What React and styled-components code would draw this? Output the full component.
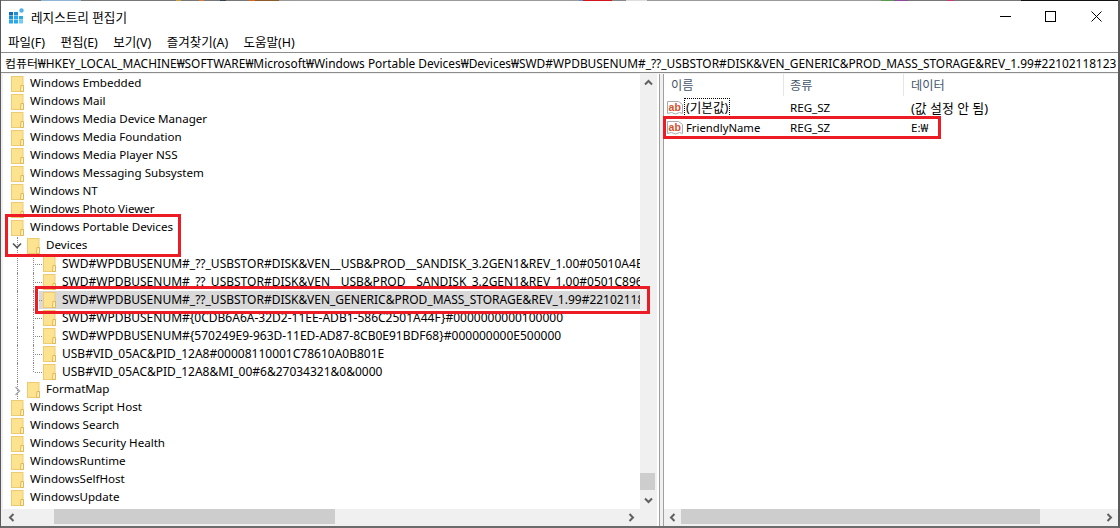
import React from 'react';
import styled, { createGlobalStyle } from 'styled-components';

const Global = createGlobalStyle`
  html, body { margin: 0; padding: 0; background: #fff; overflow: hidden; }
  * { box-sizing: border-box; }
`;
const FONT = `"Noto Sans", "Noto Sans CJK KR", sans-serif`;

const Window = styled.div`
  position: relative;
  width: 1120px;
  height: 528px;
  background: #f0f0f0;
  overflow: hidden;
  display: flex;
  flex-direction: column;
  font-family: ${FONT};
  font-size: 12px;
  color: #000;
  border-left: 1px solid #5a5a5a;
  border-right: 2px solid #5a5a5a;
  border-bottom: 2px solid #6b6b6b;
`;
const DesktopStrip = styled.div`
  height: 1px;
  flex: none;
  background: linear-gradient(90deg,
    #777 0 40px, #8fb4d8 40px 80px, #777 80px 175px, #d09a3c 175px 180px, #777 180px 198px, #d87a3c 198px 203px,
    #777 203px 219px, #30404f 219px 225px, #777 225px 248px, #d8641e 248px 254px, #8a5a2a 254px 278px,
    #999 278px 578px, #5a8fc8 578px 582px, #d4141c 582px 611px, #888 611px 625px, #ddd 625px 646px, #999 646px 880px,
    #5a9a50 880px 893px, #8a4a9a 893px 907px, #777 907px 946px, #c8387a 946px 953px, #777 953px 1020px, #111 1020px);
`;
const TitleBar = styled.div`
  height: 30px;
  flex: none;
  display: flex;
  align-items: center;
  padding-left: 8px;
  gap: 6px;
  background: #fff;
`;
const TitleText = styled.div`
  font-size: 12.6px;
  flex: 1;
`;
const WinButtons = styled.div`
  display: flex;
  margin-right: -1px;
`;
const WinBtn = styled.div`
  width: 45.5px;
  height: 30px;
  display: flex;
  align-items: center;
  justify-content: center;
`;
const MenuBar = styled.div`
  height: 21px;
  flex: none;
  display: flex;
  align-items: center;
  gap: 15.4px;
  padding-left: 7px;
  background: #fff;
`;
const MenuItem = styled.span`
  font-size: 12.5px;
  white-space: nowrap;
`;
const AddressBar = styled.div`
  height: 21px;
  flex: none;
  display: flex;
  align-items: center;
  padding-left: 4px;
  overflow: hidden;
  white-space: nowrap;
  border-top: 1px solid #8c8c8c;
  border-bottom: 1px solid #8c8c8c;
  background: #fff;
  font-size: 11.9px;
`;
const Panes = styled.div`
  flex: 1;
  min-height: 0;
  display: flex;
  padding-top: 1px;
  background: #f0f0f0;
`;
const LeftPane = styled.div`
  width: 657px;
  flex: none;
  margin-left: 2px;
  display: grid;
  grid-template-columns: 637px 17px;
  grid-template-rows: 435px 17px;
  background: #fff;
  border-right: 1px solid #a0a0a0;
`;
const Splitter = styled.div`
  width: 3px;
  flex: none;
`;
const RightPane = styled.div`
  flex: 1;
  min-width: 0;
  display: grid;
  grid-template-rows: 435px 17px;
  background: #fff;
  border-left: 1px solid #a0a0a0;
`;
const TreeView = styled.div`
  overflow: hidden;
  min-width: 0;
  padding-top: 1px;
  position: relative;
`;
const TreeRow = styled.div`
  height: 18px;
  display: flex;
  align-items: center;
  position: relative;
  padding-left: ${p => p.$indent}px;
  white-space: nowrap;
`;
const RowLabel = styled.span`
  margin-left: 6px;
  font-size: ${p => (p.$caps ? 12 : 11.6)}px;
  line-height: 16px;
  padding-bottom: ${p => (p.$caps ? 0 : 2)}px;
  white-space: nowrap;
`;
const SelectedBand = styled.div`
  display: flex;
  align-items: center;
  background: #d9d9d9;
  height: 18px;
  flex: 1;
  min-width: 0;
  margin-left: -4px;
  padding-left: 4px;
  overflow: hidden;
  white-space: nowrap;
`;
const GuideV = styled.i`
  position: absolute;
  left: ${p => p.$x}px;
  top: 0;
  height: ${p => (p.$half ? 9 : 18)}px;
  border-left: 1px dotted #8a8a8a;
`;
const GuideH = styled.i`
  position: absolute;
  left: ${p => p.$x}px;
  top: 9px;
  width: 7px;
  border-top: 1px dotted #8a8a8a;
`;
const Chevron = styled.svg`
  position: absolute;
  left: ${p => p.$left}px;
  top: 5px;
`;
const VScroll = styled.div`
  background: #f0f0f0;
  display: flex;
  flex-direction: column;
  align-items: center;
`;
const VTrack = styled.div`
  flex: 1;
  width: 100%;
  position: relative;
`;
const VThumb = styled.div`
  position: absolute;
  left: 0;
  right: 2px;
  top: ${p => p.$top}px;
  height: 17px;
  background: #cdcdcd;
`;
const ScrollEnd = styled.div`
  width: 17px;
  height: 17px;
  flex: none;
  display: flex;
  align-items: center;
  justify-content: center;
`;
const HScroll = styled.div`
  background: #f0f0f0;
  display: flex;
  align-items: stretch;
`;
const HThumb = styled.div`
  background: #cdcdcd;
  margin: 0 0 2px ${p => p.$gap}px;
  width: ${p => p.$w}px;
  flex: none;
`;
const HSpace = styled.div`
  flex: 1;
`;
const Corner = styled.div`
  background: #f0f0f0;
`;
const ListView = styled.div`
  overflow: hidden;
  display: flex;
  flex-direction: column;
`;
const ListHead = styled.div`
  height: 23px;
  flex: none;
  display: grid;
  grid-template-columns: 120px 120px 1fr;
  color: #45556b;
`;
const HeadCell = styled.div`
  border-right: ${p => (p.$last ? 'none' : '1px solid #e5e5e5')};
  padding-left: ${p => (p.$tight ? 6 : 7)}px;
  font-size: 12.2px;
  display: flex;
  align-items: center;
  margin-bottom: 1px;
`;
const ListRow = styled.div`
  height: 20px;
  display: grid;
  grid-template-columns: 120px 120px 1fr;
  align-items: center;
  font-size: 12px;
`;
const NameCell = styled.div`
  display: flex;
  align-items: center;
  padding-left: 3px;
  gap: 2px;
  white-space: nowrap;
`;
const NameText = styled.span`
  padding: 0 1px;
  line-height: 17px;
  font-size: ${p => (p.$ko ? 12.6 : 11.3)}px;
  outline: ${p => (p.$focus ? '1px dotted #000' : 'none')};
`;
const Cell = styled.div`
  padding-left: ${p => (p.$tight ? 6 : 7)}px;
  white-space: nowrap;
  font-size: ${p => (p.$ko ? 12.9 : 11.6)}px;
`;
const RedBox = styled.div`
  position: absolute;
  left: ${p => p.$l}px;
  top: ${p => p.$t}px;
  width: ${p => p.$w}px;
  height: ${p => p.$h}px;
  border: 3px solid #ed1c24;
  pointer-events: none;
`;

const Folder = () => (
  <svg width="13" height="16" viewBox="0 0 13 16" style={{ flex: 'none' }}>
    <rect x=".5" y=".5" width="11.5" height="15" fill="#fde290" stroke="#eecb72" />
    <path d="M10 9.5h2.5v6H9.5z" fill="#fff3c8" stroke="#e2b650" />
  </svg>
);
const AppIcon = () => (
  <svg width="16" height="16" viewBox="0 0 16 16" style={{ flex: 'none' }}>
    <rect x="0" y="4" width="4" height="3.5" fill="#0f6cb5" />
    <rect x="5" y="4" width="4" height="3.5" fill="#1b91d9" />
    <rect x="0" y="8" width="4" height="3.5" fill="#1b91d9" />
    <rect x="5" y="8" width="4" height="3.5" fill="#2ba8e8" />
    <rect x="10" y="8" width="4" height="3.5" fill="#2ba8e8" />
    <rect x="0" y="12" width="4" height="3.5" fill="#2ba8e8" />
    <rect x="5" y="12" width="4" height="3.5" fill="#2ba8e8" />
    <rect x="10" y="12" width="4" height="3.5" fill="#6fcdf5" />
    <circle cx="12.5" cy="2.5" r="2.2" fill="#4fb4e6" />
  </svg>
);
const RegIcon = () => (
  <svg width="16" height="15" viewBox="0 0 16 15" style={{ flex: 'none' }}>
    <path d="M.5 1.5h11l4 3v9l-3-1-4 1.5-4-1.5-4 1z" fill="#fff" stroke="#ababab" />
    <text x="1.6" y="10.5" fontFamily="Liberation Sans, sans-serif" fontWeight="700" fontSize="10.5" fill="#d4522c">ab</text>
  </svg>
);
const Arrow = ({ dir }) => {
  const rot = { up: 0, down: 180, left: 270, right: 90 }[dir];
  return (
    <svg width="9" height="7" viewBox="0 0 9 7" style={{ transform: `rotate(${rot}deg)` }}>
      <path d="M1 5.5l3.5-3.5 3.5 3.5" fill="none" stroke="#606060" strokeWidth="2" />
    </svg>
  );
};

const rows = [
  ['Windows Embedded', 1], ['Windows Mail', 1], ['Windows Media Device Manager', 1], ['Windows Media Foundation', 1],
  ['Windows Media Player NSS', 1], ['Windows Messaging Subsystem', 1], ['Windows NT', 1], ['Windows Photo Viewer', 1],
  ['Windows Portable Devices', 1], ['Devices', 2, 'open'],
  ['SWD#WPDBUSENUM#_??_USBSTOR#DISK&VEN__USB&PROD__SANDISK_3.2GEN1&REV_1.00#05010A4B4F1B0000', 3],
  ['SWD#WPDBUSENUM#_??_USBSTOR#DISK&VEN__USB&PROD__SANDISK_3.2GEN1&REV_1.00#0501C896C1B20000', 3],
  ['SWD#WPDBUSENUM#_??_USBSTOR#DISK&VEN_GENERIC&PROD_MASS_STORAGE&REV_1.99#22102118123456', 3, 'sel'],
  ['SWD#WPDBUSENUM#{0CDB6A6A-32D2-11EE-ADB1-586C2501A44F}#0000000000100000', 3],
  ['SWD#WPDBUSENUM#{570249E9-963D-11ED-AD87-8CB0E91BDF68}#000000000E500000', 3],
  ['USB#VID_05AC&PID_12A8#00008110001C78610A0B801E', 3],
  ['USB#VID_05AC&PID_12A8&MI_00#6&27034321&0&0000', 3, 'last'],
  ['FormatMap', 2, 'closed'],
  ['Windows Script Host', 1], ['Windows Search', 1], ['Windows Security Health', 1], ['WindowsRuntime', 1], ['WindowsSelfHost', 1], ['WindowsUpdate', 1],
];
const indent = { 1: 8, 2: 24, 3: 40 };

export default function App() {
  return (
    <Window>
      <Global />
      <DesktopStrip />
      <TitleBar>
        <AppIcon />
        <TitleText>레지스트리 편집기</TitleText>
        <WinButtons>
          <WinBtn><svg width="11" height="11"><path d="M0 5.5h11" stroke="#000" /></svg></WinBtn>
          <WinBtn><svg width="11" height="11"><rect x=".5" y=".5" width="10" height="10" fill="none" stroke="#000" /></svg></WinBtn>
          <WinBtn><svg width="11" height="11"><path d="M.5.5l10 10M10.5.5l-10 10" stroke="#000" /></svg></WinBtn>
        </WinButtons>
      </TitleBar>
      <MenuBar>
        <MenuItem>파일(F)</MenuItem><MenuItem>편집(E)</MenuItem><MenuItem>보기(V)</MenuItem><MenuItem>즐겨찾기(A)</MenuItem><MenuItem>도움말(H)</MenuItem>
      </MenuBar>
      <AddressBar>컴퓨터₩HKEY_LOCAL_MACHINE₩SOFTWARE₩Microsoft₩Windows Portable Devices₩Devices₩SWD#WPDBUSENUM#_??_USBSTOR#DISK&VEN_GENERIC&PROD_MASS_STORAGE&REV_1.99#22102118123</AddressBar>
      <Panes>
        <LeftPane>
          <TreeView>
            {rows.map(([t, lvl, kind]) => (
              <TreeRow key={t} $indent={indent[lvl]}>
                {lvl >= 2 && <GuideV $x={14} />}
                {lvl === 3 && <GuideV $x={30} $half={kind === 'last'} />}
                {lvl === 3 && <GuideH $x={32} />}
                {kind === 'open' && <Chevron $left={9} width="10" height="8" viewBox="0 0 10 8"><path d="M1 1.5l4 4 4-4" fill="none" stroke="#555" strokeWidth="1.6" /></Chevron>}
                {kind === 'closed' && <Chevron $left={11} width="8" height="10" viewBox="0 0 8 10"><path d="M1.5 1l4 4-4 4" fill="none" stroke="#a6a6a6" strokeWidth="1.4" /></Chevron>}
                {kind === 'sel'
                  ? <SelectedBand><Folder /><RowLabel $caps>{t}</RowLabel></SelectedBand>
                  : <><Folder /><RowLabel $caps={lvl === 3}>{t}</RowLabel></>}
              </TreeRow>
            ))}
          </TreeView>
          <VScroll>
            <ScrollEnd><Arrow dir="up" /></ScrollEnd>
            <VTrack><VThumb $top={382} /></VTrack>
            <ScrollEnd><Arrow dir="down" /></ScrollEnd>
          </VScroll>
          <HScroll>
            <ScrollEnd><Arrow dir="left" /></ScrollEnd>
            <HThumb $gap={34} $w={281} />
            <HSpace />
            <ScrollEnd><Arrow dir="right" /></ScrollEnd>
          </HScroll>
          <Corner />
        </LeftPane>
        <Splitter />
        <RightPane>
          <ListView>
            <ListHead><HeadCell>이름</HeadCell><HeadCell $tight>종류</HeadCell><HeadCell $last>데이터</HeadCell></ListHead>
            <ListRow><NameCell><RegIcon /><NameText $ko $focus>(기본값)</NameText></NameCell><Cell $tight>REG_SZ</Cell><Cell $ko>(값 설정 안 됨)</Cell></ListRow>
            <ListRow><NameCell><RegIcon /><NameText>FriendlyName</NameText></NameCell><Cell $tight>REG_SZ</Cell><Cell>E:₩</Cell></ListRow>
          </ListView>
          <HScroll>
            <ScrollEnd><Arrow dir="left" /></ScrollEnd>
            <HThumb $gap={0} $w={359} />
            <HSpace />
            <ScrollEnd><Arrow dir="right" /></ScrollEnd>
          </HScroll>
        </RightPane>
      </Panes>
      <RedBox $l={4} $t={214} $w={176} $h={43} />
      <RedBox $l={34} $t={286} $w={615} $h={28} />
      <RedBox $l={662} $t={116} $w={278} $h={23} />
    </Window>
  );
}
